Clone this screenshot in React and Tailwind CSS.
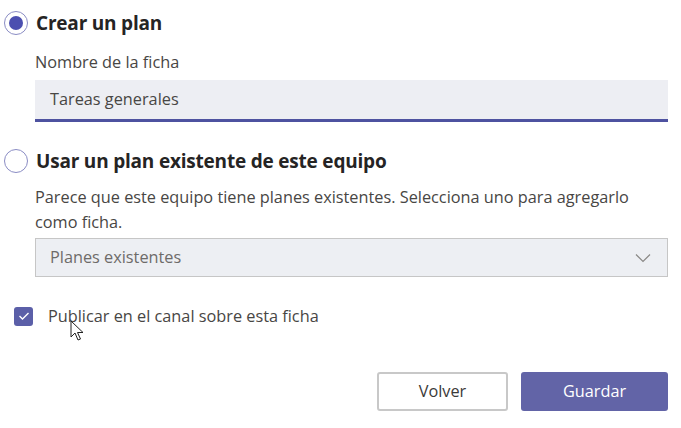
import React from "react";

export default function App() {
  const font = { fontFamily: '"Open Sans", "Noto Sans", sans-serif' };
  return (
    <div className="w-[681px] h-[428px] bg-white relative overflow-hidden text-[#252424]" style={font}>
      <div className="pl-[4px] pr-[13px] pt-[11px] flex flex-col">
        <div className="flex items-center h-[24px] gap-[8px]">
          <div className="w-[24px] h-[24px] rounded-full border border-[#8a8cc4] flex items-center justify-center">
            <div className="w-[14px] h-[14px] rounded-full bg-[#4b4fb0]" />
          </div>
          <span className="text-[19px] font-bold tracking-[-0.2px]">Crear un plan</span>
        </div>
        <div className="pl-[31px] mt-[16px] text-[16.3px] text-[#484644] leading-[22px]">Nombre de la ficha</div>
        <div className="ml-[31px] mt-[7px] h-[42px] bg-[#edeef3] border-b-[3px] border-[#4e52a0] flex items-center pl-[15px] text-[16.3px] text-[#484644]">
          Tareas generales
        </div>
        <div className="flex items-center h-[24px] gap-[8px] mt-[27px]">
          <div className="w-[24px] h-[24px] rounded-full border border-[#8a8cc4]" />
          <span className="text-[19px] font-bold tracking-[-0.2px]">Usar un plan existente de este equipo</span>
        </div>
        <div className="pl-[31px] pr-[20px] mt-[12px] text-[16.3px] text-[#484644] leading-[25px]">
          Parece que este equipo tiene planes existentes. Selecciona uno para agregarlo como ficha.
        </div>
        <div className="ml-[31px] mt-[3px] h-[39px] bg-[#edeff3] border border-[#c6c6c6] flex items-center justify-between pl-[14px] pr-[16px] text-[16.3px] text-[#6d6b69]">
          <span>Planes existentes</span>
          <svg width="16" height="10" viewBox="0 0 16 10" fill="none" stroke="#8a8886" strokeWidth="1.2">
            <path d="M1 1.5 L8 8.5 L15 1.5" />
          </svg>
        </div>
        <div className="flex items-center mt-[29px] pl-[10px] gap-[15px] h-[20px]">
          <div className="w-[19px] h-[19px] rounded-[3px] bg-[#5b5fa8] flex items-center justify-center">
            <svg width="12" height="10" viewBox="0 0 12 10" fill="none" stroke="white" strokeWidth="1.4">
              <path d="M1.5 5 L4.5 8 L10.5 2" />
            </svg>
          </div>
          <span className="text-[16.3px] text-[#484644]">Publicar en el canal sobre esta ficha</span>
        </div>
        <div className="flex justify-end gap-[13px] mt-[46px]">
          <button className="w-[131px] h-[39px] border-2 border-[#c8c8c8] rounded-[3px] bg-white text-[16.3px] text-[#3b3a39]">Volver</button>
          <button className="w-[147px] h-[39px] rounded-[3px] bg-[#6264a7] text-[16.3px] font-medium text-white">Guardar</button>
        </div>
      </div>
      <svg className="absolute left-[70px] top-[320px]" width="14" height="22" viewBox="0 0 14 22">
        <path d="M1 1 L1 17 L5 13 L8 20 L10.5 19 L7.5 12.5 L13 12.5 Z" fill="white" stroke="#222" strokeWidth="1" strokeLinejoin="round" />
      </svg>
    </div>
  );
}
